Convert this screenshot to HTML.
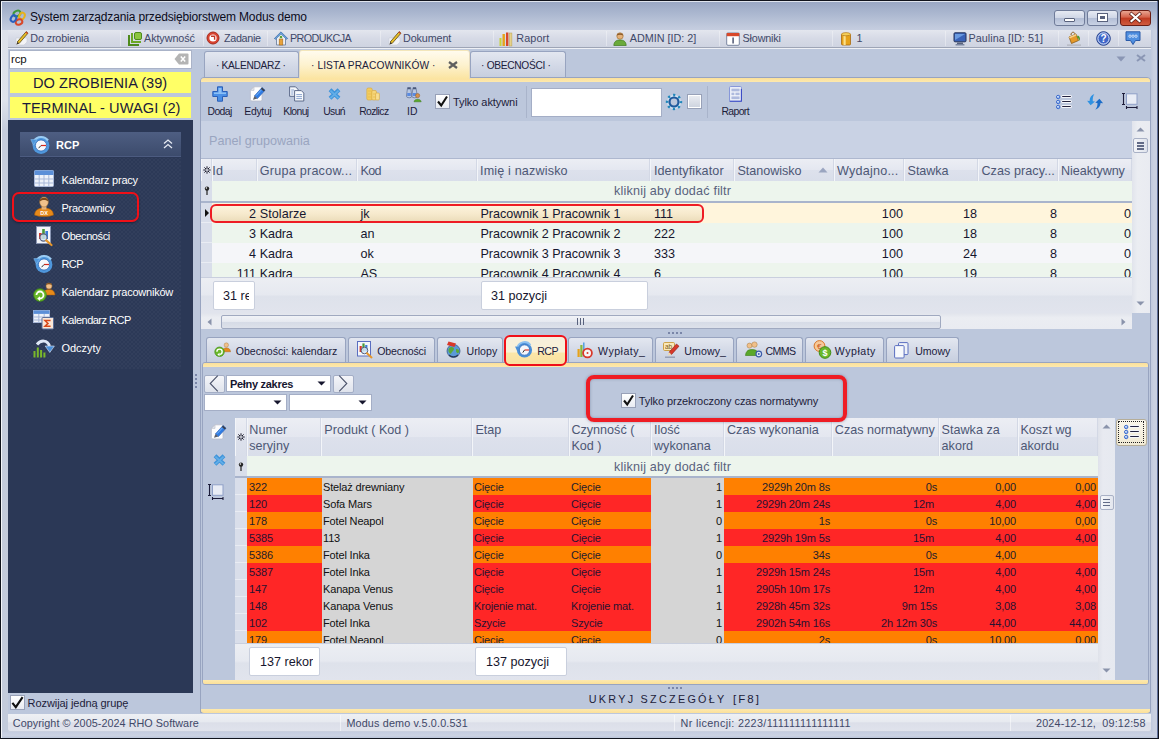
<!DOCTYPE html><html lang="pl"><head><meta charset="utf-8"><title>System zarządzania przedsiębiorstwem Modus demo</title><style>
*{box-sizing:border-box;margin:0;padding:0}
html,body{width:1159px;height:739px;overflow:hidden}
body{position:relative;background:#c3cbdd;font-family:"Liberation Sans",sans-serif;font-size:11px;color:#1c1c3a;-webkit-font-smoothing:antialiased}
.a{position:absolute}
.t{position:absolute;white-space:nowrap;line-height:1}
.t11{font-size:11px;letter-spacing:-0.15px}
.t13{font-size:12.6px}
.hd{color:#4d5775}
svg{position:absolute;overflow:visible}
.cb{position:absolute;width:14px;height:14px;border:1px solid #98a1b8;background:linear-gradient(#fff,#e9ecf3)}
.tab{position:absolute;border:1px solid #98a4c0;border-bottom:none;border-radius:3px 3px 0 0;background:linear-gradient(#e3e7f0,#d2d8e6 55%,#c6cede)}
.ytab{background:linear-gradient(#fffbee,#fdf2cf 50%,#fbe4a0)}
.col{position:absolute;top:0;height:100%;border-left:1px solid #f2f4f8;border-right:1px solid #cfd5e3}
.wbox{position:absolute;background:#fff;border:1px solid #c9cfdd;border-radius:2px}
.inp{position:absolute;background:#fff;border:1px solid #a4aec6}
</style></head><body>
<div class="a" style="left:0px;top:0px;width:1159px;height:739px;background:#10131c"></div>
<div class="a" style="left:1px;top:1px;width:1157px;height:737px;background:linear-gradient(#98a6c3 0,#a4b1cb 8px,#b4bfd5 18px,#c6cee0 29px,#bcc7dc 30px)"></div>
<div class="a" style="left:1px;top:1px;width:1px;height:737px;background:#f4f6fa"></div>
<div class="a" style="left:1px;top:1px;width:1157px;height:1px;background:#dfe4ee"></div>
<div class="a" style="left:2px;top:30px;width:6px;height:708px;background:linear-gradient(#dde1ea,#dfe3ec 70px,#c5ccdc 100px,#c3cbdb)"></div>
<div class="a" style="left:1151px;top:30px;width:7px;height:708px;background:linear-gradient(90deg,#bfc8dc,#c9d0e1 40%,#c9d0e1 80%,#a9b6d2)"></div>
<div class="a" style="left:2px;top:732px;width:1156px;height:5.5px;background:linear-gradient(#c5cde0,#cbd2e2 60%,#bcc6da)"></div>
<div class="a" style="left:1157px;top:1px;width:1px;height:737px;background:#5f6f9a"></div>
<div class="t " style="left:30px;top:11px;font-size:12px;letter-spacing:-0.155px;color:#0b0b1a">System zarządzania przedsiębiorstwem Modus demo</div>
<div class="a" style="left:1054px;top:10px;width:31px;height:16px;border:1px solid #6f7b99;border-radius:3px;background:linear-gradient(#e6eaf3,#cfd6e6 50%,#b3bed6 51%,#c9d2e4)"></div>
<div class="a" style="left:1064px;top:18px;width:11px;height:4px;border:1px solid #59627d;background:#fff;border-radius:1px"></div>
<div class="a" style="left:1087px;top:10px;width:31px;height:16px;border:1px solid #6f7b99;border-radius:3px;background:linear-gradient(#e6eaf3,#cfd6e6 50%,#b3bed6 51%,#c9d2e4)"></div>
<div class="a" style="left:1098px;top:14px;width:9px;height:7px;border:2px solid #fff;outline:1px solid #59627d;background:#59627d"></div>
<div class="a" style="left:1120px;top:10px;width:31px;height:16px;border:1px solid #6b1d14;border-radius:3px;background:linear-gradient(#e8a592,#d4624a 45%,#bf3a21 50%,#cf5b3f)"></div>
<svg style="left:1130px;top:13px" width="11" height="9" viewBox="0 0 11 9"><path d="M1.5 1 L9.5 8 M9.5 1 L1.5 8" stroke="#5a1a10" stroke-width="3.6" stroke-linecap="square"/><path d="M1.5 1 L9.5 8 M9.5 1 L1.5 8" stroke="#fff" stroke-width="2.2" stroke-linecap="square"/></svg>
<div class="a" style="left:8px;top:30px;width:1143px;height:17px;background:linear-gradient(#e3e6ee,#d6dae6 50%,#cfd4e1)"></div>
<div class="a" style="left:8px;top:47px;width:1143px;height:1px;background:#9ea5b6"></div>
<div class="a" style="left:8px;top:48px;width:1143px;height:1px;background:#eef0f5"></div>
<div class="t " style="left:30.3px;top:33px;font-size:10.8px;letter-spacing:-0.147px;color:#3f4868">Do zrobienia</div>
<div class="t " style="left:144px;top:33px;font-size:10.8px;letter-spacing:-0.075px;color:#3f4868">Aktywność</div>
<div class="t " style="left:224px;top:33px;font-size:10.8px;letter-spacing:-0.336px;color:#3f4868">Zadanie</div>
<div class="t " style="left:290px;top:33px;font-size:10.8px;letter-spacing:-0.6px;color:#3f4868">PRODUKCJA</div>
<div class="t " style="left:403px;top:33px;font-size:10.8px;letter-spacing:-0.13px;color:#3f4868">Dokument</div>
<div class="t " style="left:516.3px;top:33px;font-size:10.8px;letter-spacing:0.119px;color:#3f4868">Raport</div>
<div class="t " style="left:629.7px;top:33px;font-size:10.8px;letter-spacing:0.001px;color:#3f4868">ADMIN [ID: 2]</div>
<div class="t " style="left:742.5px;top:33px;font-size:10.8px;letter-spacing:-0.158px;color:#3f4868">Słowniki</div>
<div class="t " style="left:856.5px;top:33px;font-size:10.8px;color:#3f4868">1</div>
<div class="t " style="left:968.5px;top:33px;font-size:10.8px;letter-spacing:0.045px;color:#3f4868">Paulina [ID: 51]</div>
<div class="a" style="left:120px;top:31px;width:1px;height:15px;background:rgba(255,255,255,.35)"></div>
<div class="a" style="left:203px;top:31px;width:1px;height:15px;background:rgba(255,255,255,.35)"></div>
<div class="a" style="left:267px;top:31px;width:1px;height:15px;background:rgba(255,255,255,.35)"></div>
<div class="a" style="left:380px;top:31px;width:1px;height:15px;background:rgba(255,255,255,.35)"></div>
<div class="a" style="left:493px;top:31px;width:1px;height:15px;background:rgba(255,255,255,.35)"></div>
<div class="a" style="left:606px;top:31px;width:1px;height:15px;background:rgba(255,255,255,.35)"></div>
<div class="a" style="left:719px;top:31px;width:1px;height:15px;background:rgba(255,255,255,.35)"></div>
<div class="a" style="left:832px;top:31px;width:1px;height:15px;background:rgba(255,255,255,.35)"></div>
<div class="a" style="left:945px;top:31px;width:1px;height:15px;background:rgba(255,255,255,.35)"></div>
<div class="a" style="left:1058px;top:31px;width:1px;height:15px;background:rgba(255,255,255,.35)"></div>
<div class="a" style="left:1088px;top:31px;width:1px;height:15px;background:rgba(255,255,255,.35)"></div>
<div class="a" style="left:1118px;top:31px;width:1px;height:15px;background:rgba(255,255,255,.35)"></div>
<svg style="left:9px;top:9px" width="18" height="18" viewBox="0 0 18 18">
<ellipse cx="8" cy="4.5" rx="3.6" ry="2.6" fill="none" stroke="#3f9a3a" stroke-width="2" transform="rotate(-25 8 4.5)"/>
<ellipse cx="13" cy="7" rx="2.6" ry="3.4" fill="none" stroke="#e6b21c" stroke-width="2" transform="rotate(25 13 7)"/>
<ellipse cx="10" cy="13" rx="3.4" ry="2.6" fill="none" stroke="#d8482a" stroke-width="2" transform="rotate(-20 10 13)"/>
<ellipse cx="4.5" cy="9.5" rx="2.6" ry="3.4" fill="none" stroke="#2a5fc0" stroke-width="2" transform="rotate(30 4.5 9.5)"/>
</svg>
<svg style="left:15px;top:31px" width="14" height="15" viewBox="0 0 14 15">
<path d="M1 7 L1 14 L9 14 L12 11 L12 7Z" fill="#f3f4f7" stroke="#c9cdd8" stroke-width=".6"/>
<path d="M11.2 0.6 L13 2.2 L4 12.6 L2.2 11Z" fill="#e9bf2a" stroke="#5b4a14" stroke-width=".8"/>
<path d="M11.2 0.6 L13 2.2 L12.2 3.1 L10.4 1.5Z" fill="#d33a2c"/>
<path d="M2.2 11 L4 12.6 L1.4 13.8Z" fill="#3a3328"/>
</svg>
<svg style="left:388px;top:31px" width="14" height="15" viewBox="0 0 14 15">
<path d="M1 7 L1 14 L9 14 L12 11 L12 7Z" fill="#f3f4f7" stroke="#c9cdd8" stroke-width=".6"/>
<path d="M11.2 0.6 L13 2.2 L4 12.6 L2.2 11Z" fill="#e9bf2a" stroke="#5b4a14" stroke-width=".8"/>
<path d="M11.2 0.6 L13 2.2 L12.2 3.1 L10.4 1.5Z" fill="#d33a2c"/>
<path d="M2.2 11 L4 12.6 L1.4 13.8Z" fill="#3a3328"/>
</svg>
<svg style="left:128px;top:32px" width="14" height="14" viewBox="0 0 14 14">
<path d="M1 3 L1 13 L11 13" fill="none" stroke="#4e8a1c" stroke-width="2"/>
<path d="M4 1 L4 10 L13 10" fill="none" stroke="#6aa826" stroke-width="2"/>
<rect x="6.5" y="0.5" width="7" height="7" rx="1.5" fill="#8cc63f" stroke="#4e8a1c"/>
</svg>
<svg style="left:206px;top:31px" width="14" height="14" viewBox="0 0 14 14">
<circle cx="7" cy="7" r="6" fill="#d9432f" stroke="#a52a1c" stroke-width="1"/>
<circle cx="7" cy="7" r="3.6" fill="#fff"/>
<path d="M5 5.2 L8.6 5.2 L8.6 8.8" fill="none" stroke="#c23a28" stroke-width="1.4"/>
</svg>
<svg style="left:274px;top:31px" width="14" height="15" viewBox="0 0 14 15">
<path d="M7 1 L13.5 7.5 L11.5 7.5 L11.5 14 L2.5 14 L2.5 7.5 L0.5 7.5Z" fill="#eef0f4" stroke="#7c8da8" stroke-width="1"/>
<path d="M7 0.8 L13.6 7.4 L12.4 8.4 L7 3 L1.6 8.4 L0.4 7.4Z" fill="#6aa0d8" stroke="#3a6aa8" stroke-width=".5"/>
<rect x="5.2" y="8" width="3.6" height="6" fill="#e8a23a" stroke="#a86a1a" stroke-width=".6"/>
<circle cx="7" cy="6" r="1.3" fill="#59a33a"/>
</svg>
<svg style="left:499px;top:32px" width="15" height="14" viewBox="0 0 15 14">
<rect x="0.5" y="6" width="2" height="8" fill="#c8d23a"/>
<rect x="3.5" y="2" width="2.4" height="12" fill="#e6a21a"/>
<rect x="7" y="0.5" width="2.4" height="13.5" fill="#d8482a"/>
<rect x="10.5" y="1" width="2.4" height="13" fill="#e6d28a" stroke="#b8a050" stroke-width=".5"/>
</svg>
<svg style="left:613px;top:32px" width="14" height="14" viewBox="0 0 14 14">
<circle cx="7" cy="4" r="3.2" fill="#e6b27a" stroke="#a8763a" stroke-width=".7"/>
<path d="M0.8 13.5 C1 9 4 8 7 8 C10 8 13 9 13.2 13.5Z" fill="#6aaa3a" stroke="#3f7a1c" stroke-width=".7"/>
<path d="M3.8 3.4 C4 0.6 10 0.6 10.2 3.4 C8 2.4 6 2.4 3.8 3.4Z" fill="#8a5a2a"/>
</svg>
<svg style="left:726px;top:32px" width="14" height="14" viewBox="0 0 14 14">
<rect x="0.7" y="1" width="12.6" height="12.3" rx="1.2" fill="#fff" stroke="#7a86a0" stroke-width="1"/>
<rect x="0.7" y="1" width="12.6" height="3.2" fill="#d8482a"/>
<rect x="6.3" y="5.5" width="1.6" height="6" fill="#59627d"/>
</svg>
<svg style="left:840px;top:32px" width="12" height="14" viewBox="0 0 12 14">
<rect x="1.5" y="2" width="9" height="11" rx="1" fill="#e6a21a" stroke="#a86a10" stroke-width=".8"/>
<rect x="3.5" y="2" width="2.2" height="11" fill="#fbe08a"/>
<ellipse cx="6" cy="2.2" rx="4.5" ry="1.6" fill="#f6d05a" stroke="#a86a10" stroke-width=".6"/>
</svg>
<svg style="left:953px;top:32px" width="14" height="14" viewBox="0 0 14 14">
<rect x="1" y="0.8" width="12" height="9" rx="1" fill="#3a63b8" stroke="#26345a" stroke-width="1"/>
<path d="M2 2 L12 2 L2 8Z" fill="#6a9ae0"/>
<rect x="4" y="10.5" width="6" height="1.5" fill="#59627d"/>
<rect x="2.5" y="12" width="9" height="1.6" rx=".6" fill="#7a86a0"/>
</svg>
<svg style="left:1066px;top:31px" width="16" height="15" viewBox="0 0 16 15">
<path d="M3 6 L10 3 L12.5 9.5 L5.5 12.5Z" fill="#e69a2a" stroke="#8a5a14" stroke-width=".8"/>
<path d="M3 6 L10 3 L10.6 4.6 L3.6 7.6Z" fill="#f6d08a"/>
<path d="M5 4 C5 0.5 8.5 0.5 9 3" fill="none" stroke="#8a5a14" stroke-width="1"/>
<path d="M11.5 4.5 C14 5 14.5 8 13.5 10 C13 8 12.4 7 11 6.2Z" fill="#4e9a2a"/>
<rect x="1" y="13.3" width="14" height="1.7" fill="#b9bcc6"/>
</svg>
<svg style="left:1096px;top:31px" width="15" height="15" viewBox="0 0 15 15">
<circle cx="7.5" cy="7.5" r="6.8" fill="#3f66c8" stroke="#26418a" stroke-width="1"/>
<circle cx="7.5" cy="7.5" r="5.6" fill="none" stroke="#dfe8fb" stroke-width="1"/>
<text x="7.5" y="11.3" font-family="Liberation Sans, sans-serif" font-size="10" font-weight="bold" fill="#fff" text-anchor="middle">?</text>
</svg>
<svg style="left:1125px;top:31px" width="16" height="15" viewBox="0 0 16 15">
<path d="M1 0.8 L15 0.8 L15 9.5 L10.5 9.5 L8 13.5 L5.5 9.5 L1 9.5Z" fill="#4f8fe0" stroke="#2a5aa8" stroke-width="1"/>
<circle cx="5" cy="5.2" r="1.2" fill="#4f8fe0" stroke="#e8f0fc" stroke-width=".8"/>
<circle cx="8" cy="5.2" r="1.2" fill="#4f8fe0" stroke="#e8f0fc" stroke-width=".8"/>
<circle cx="11" cy="5.2" r="1.2" fill="#4f8fe0" stroke="#e8f0fc" stroke-width=".8"/>
</svg>
<div class="a" style="left:9px;top:50px;width:183px;height:19px;background:#fff;border:1px solid #aab3c8"></div>
<div class="t t11" style="left:11px;top:54px;color:#111;font-size:11.5px">rcp</div>
<svg style="left:174px;top:53px" width="15" height="12" viewBox="0 0 15 12"><path d="M5 0.5 L13.5 0.5 Q14.5 0.5 14.5 1.5 L14.5 10.5 Q14.5 11.5 13.5 11.5 L5 11.5 L0.5 6Z" fill="#b4b4b4"/><path d="M6.8 3.6 L11.2 8.4 M11.2 3.6 L6.8 8.4" stroke="#fff" stroke-width="1.5"/></svg>
<div class="a" style="left:10px;top:72px;width:181px;height:21px;background:#ffff66"></div>
<div class="a" style="left:10px;top:97px;width:181px;height:21px;background:#ffff66"></div>
<div class="t " style="left:33px;top:76px;font-size:14.6px;letter-spacing:0.025px;color:#1a1a3a">DO ZROBIENIA (39)</div>
<div class="t " style="left:22px;top:101px;font-size:14.6px;letter-spacing:0.076px;color:#1a1a3a">TERMINAL - UWAGI (2)</div>
<div class="a" style="left:8px;top:120px;width:185px;height:573px;background:#2b3856"></div>
<div class="a" style="left:20px;top:158px;width:161px;height:211px;background-color:#2c3957;background-image:radial-gradient(#35425f 0.6px,transparent 0.9px),radial-gradient(#35425f 0.6px,transparent 0.9px);background-size:4px 4px;background-position:0 0,2px 2px"></div>
<div class="a" style="left:20px;top:132px;width:161px;height:25px;background:linear-gradient(#4e5e82,#3c4b6c);border-bottom:1px solid #4c5b80"></div>
<div class="t " style="left:56px;top:140px;font-size:11px;font-weight:bold;color:#fff">RCP</div>
<svg style="left:163px;top:139px" width="10" height="10" viewBox="0 0 10 10"><path d="M1 4.5 L5 1 L9 4.5 M1 9 L5 5.5 L9 9" fill="none" stroke="#e6eaf3" stroke-width="1.3"/></svg>
<div class="t " style="left:61.5px;top:175px;font-size:11px;letter-spacing:-0.206px;color:#fff">Kalendarz pracy</div>
<div class="t " style="left:61.5px;top:203px;font-size:11px;letter-spacing:-0.293px;color:#fff">Pracownicy</div>
<div class="t " style="left:61.5px;top:231px;font-size:11px;letter-spacing:-0.409px;color:#fff">Obecności</div>
<div class="t " style="left:61.5px;top:259px;font-size:11px;letter-spacing:-0.6px;color:#fff">RCP</div>
<div class="t " style="left:61.5px;top:287px;font-size:11px;letter-spacing:-0.219px;color:#fff">Kalendarz pracowników</div>
<div class="t " style="left:61.5px;top:315px;font-size:11px;letter-spacing:-0.501px;color:#fff">Kalendarz RCP</div>
<div class="t " style="left:61.5px;top:343px;font-size:11px;letter-spacing:-0.038px;color:#fff">Odczyty</div>
<div class="a" style="left:12.3px;top:191.8px;width:127px;height:30px;border:2.7px solid #f01018;border-radius:7px;box-shadow:0 1px 2px rgba(10,15,30,.5)"></div>
<div class="cb" style="left:10px;top:695px;width:15px;height:15px;"></div>
<svg style="left:11px;top:696px" width="13" height="13" viewBox="0 0 13 13"><path d="M1.4 6.8 L4.8 11.2 L11.6 1.2" fill="none" stroke="#111" stroke-width="2.1"/></svg>
<div class="t " style="left:27.6px;top:698px;font-size:11px;letter-spacing:-0.069px;color:#1c1c3a">Rozwijaj jedną grupę</div>
<svg style="left:30px;top:135px" width="20" height="20" viewBox="0 0 20 20">
<circle cx="11" cy="10.5" r="8.4" fill="#4f97dc"/>
<path d="M4 6 A8.4 8.4 0 0 1 18 5.5" fill="none" stroke="#9accf4" stroke-width="2.2"/>
<path d="M0.8 4.6 L7 4.4 L3.4 10.2Z" fill="#4f97dc" stroke="#8cc2f0" stroke-width=".5"/>
<circle cx="11" cy="10.5" r="5.6" fill="#f6f8fc" stroke="#2f6ab8" stroke-width=".8"/>
<path d="M11 10.5 L16 10.5" stroke="#d8281c" stroke-width="1.2"/>
<path d="M11 10.5 L8.6 13.2" stroke="#333" stroke-width="1"/>
</svg>
<svg style="left:33px;top:254px" width="20" height="20" viewBox="0 0 20 20">
<circle cx="11" cy="10.5" r="8.4" fill="#4f97dc"/>
<path d="M4 6 A8.4 8.4 0 0 1 18 5.5" fill="none" stroke="#9accf4" stroke-width="2.2"/>
<path d="M0.8 4.6 L7 4.4 L3.4 10.2Z" fill="#4f97dc" stroke="#8cc2f0" stroke-width=".5"/>
<circle cx="11" cy="10.5" r="5.6" fill="#f6f8fc" stroke="#2f6ab8" stroke-width=".8"/>
<path d="M11 10.5 L16 10.5" stroke="#d8281c" stroke-width="1.2"/>
<path d="M11 10.5 L8.6 13.2" stroke="#333" stroke-width="1"/>
</svg>
<svg style="left:34px;top:170px" width="20" height="17" viewBox="0 0 20 17">
<rect x="0.5" y="0.5" width="19" height="16" rx="1" fill="#eef2fa" stroke="#a9b8d8" stroke-width="1"/>
<rect x="0.5" y="0.5" width="19" height="4.5" fill="#5b8fd8"/>
<path d="M0.5 9 H19.5 M0.5 13 H19.5 M5.2 5 V16.5 M10 5 V16.5 M14.8 5 V16.5" stroke="#a9b8d8" stroke-width="1"/>
</svg>
<svg style="left:34px;top:196px" width="20" height="21" viewBox="0 0 20 21">
<path d="M0.5 19 C1 13.5 5 12 10 12 C15 12 19 13.5 19.5 19 C15 21 5 21 0.5 19Z" fill="#e68a1a" stroke="#a85a0a" stroke-width=".6"/>
<rect x="7.6" y="9" width="4.8" height="4.5" fill="#e6b27a"/>
<ellipse cx="10" cy="6" rx="4.3" ry="5" fill="#f0c08a" stroke="#a8763a" stroke-width=".6"/>
<path d="M5.6 5.5 C5.4 0.5 14.6 0.5 14.4 5.5 C12.5 3.4 7.5 3.4 5.6 5.5Z" fill="#7a4a1a"/>
<text x="10" y="19" font-family="Liberation Sans, sans-serif" font-size="5.5" font-weight="bold" fill="#fff" text-anchor="middle">DX</text>
</svg>
<svg style="left:36px;top:226px" width="18" height="20" viewBox="0 0 18 20">
<rect x="0.5" y="0.5" width="14" height="17" fill="#f4f6fa" stroke="#8a96b4" stroke-width="1"/>
<rect x="3" y="7" width="2.6" height="6" fill="#d8382a"/>
<rect x="6.2" y="3" width="2.6" height="10" fill="#4a9a3a"/>
<rect x="9.4" y="5" width="2.6" height="8" fill="#3a7ad8"/>
<circle cx="7.5" cy="11.5" r="3.6" fill="rgba(210,230,250,.8)" stroke="#59627d" stroke-width="1.1"/>
<path d="M10.2 14.4 L15.5 19" stroke="#e6962a" stroke-width="2.2" stroke-linecap="round"/>
</svg>
<svg style="left:33px;top:282px" width="22" height="20" viewBox="0 0 22 20">
<circle cx="16" cy="4" r="3" fill="#f0c08a" stroke="#a8763a" stroke-width=".6"/>
<path d="M13 3 C13.2 0.2 18.8 0.2 19 3 C17.5 2 14.5 2 13 3Z" fill="#7a4a1a"/>
<path d="M10 13 C10.5 8.5 13 7.5 16 7.5 C19 7.5 21.5 8.5 22 13Z" fill="#e68a1a" stroke="#a85a0a" stroke-width=".5"/>
<circle cx="7" cy="13" r="6.3" fill="#6ab82a" stroke="#3f8a14" stroke-width=".8"/>
<path d="M3.5 13 A3.5 3.5 0 1 1 7 16.5" fill="none" stroke="#fff" stroke-width="1.8"/>
<path d="M7 14.2 L7 19 L4.2 16.6Z" fill="#fff"/>
</svg>
<svg style="left:33px;top:310px" width="22" height="20" viewBox="0 0 22 20">
<rect x="0.5" y="0.5" width="16" height="12" fill="#eef2fa" stroke="#a9b8d8" stroke-width="1"/>
<rect x="0.5" y="0.5" width="16" height="3.4" fill="#5b8fd8"/>
<path d="M0.5 7 H16.5 M0.5 10 H16.5 M5.8 4 V12.5 M11.2 4 V12.5" stroke="#a9b8d8" stroke-width="1"/>
<rect x="9" y="7.5" width="11.5" height="11.5" rx="1" fill="#fbe8d8" stroke="#5b6f9a" stroke-width="1"/>
<path d="M17.6 10.6 L12 10.6 L15 13.4 L12 16.2 L17.6 16.2" fill="none" stroke="#d8481a" stroke-width="1.5"/>
</svg>
<svg style="left:33px;top:338px" width="22" height="20" viewBox="0 0 22 20">
<rect x="0.5" y="13" width="2" height="6.5" fill="#7ab82a"/>
<rect x="3.8" y="9.5" width="2" height="10" fill="#7ab82a"/>
<rect x="7.1" y="12" width="2" height="7.5" fill="#7ab82a"/>
<rect x="10.4" y="14.5" width="2" height="5" fill="#7ab82a"/>
<path d="M4 6.5 C8 1.5 14.5 2 16.5 8" fill="none" stroke="#dfe8f6" stroke-width="3"/>
<path d="M12.2 8 L21.4 8 L16.8 14.5Z" fill="#4a8fd8" stroke="#dfe8f6" stroke-width=".6"/>
</svg>
<div class="a" style="left:195px;top:374px;width:2px;height:2px;background:#7a86a8"></div>
<div class="a" style="left:195px;top:378px;width:2px;height:2px;background:#7a86a8"></div>
<div class="a" style="left:195px;top:382px;width:2px;height:2px;background:#7a86a8"></div>
<div class="a" style="left:195px;top:386px;width:2px;height:2px;background:#7a86a8"></div>
<div class="tab" style="left:204px;top:51px;width:95px;height:27px;"></div>
<div class="tab ytab" style="left:299px;top:50px;width:171px;height:29px;border-color:#f3e6bb #e6dcc0 transparent #e6dcc0;z-index:2"></div>
<div class="tab" style="left:470px;top:51px;width:96px;height:27px;"></div>
<div class="t " style="left:216px;top:61px;font-size:10.2px;letter-spacing:-0.299px;color:#20203c">· KALENDARZ ·</div>
<div class="t " style="left:311px;top:61px;font-size:10.2px;letter-spacing:0.09px;color:#20203c;z-index:3">· LISTA PRACOWNIKÓW ·</div>
<div class="t " style="left:481px;top:61px;font-size:10.2px;letter-spacing:-0.298px;color:#20203c">· OBECNOŚCI ·</div>
<svg style="left:448px;top:61px;z-index:3" width="10" height="8" viewBox="0 0 10 8"><path d="M1 1 L9 7 M9 1 L1 7" stroke="#5f5f5f" stroke-width="2.2"/></svg>
<svg style="left:1116px;top:56px" width="10" height="6" viewBox="0 0 10 6"><path d="M0.5 0.5 L9.5 0.5 L5 5.5Z" fill="#8a96b4"/></svg>
<svg style="left:1136px;top:54px" width="10" height="8" viewBox="0 0 10 8"><path d="M1 1 L9 7 M9 1 L1 7" stroke="#8a96b4" stroke-width="2"/></svg>
<div class="a" style="left:200px;top:77px;width:951px;height:636px;background:#bcc7dc;border:1px solid #98a4c0;border-radius:4px 4px 0 0"></div>
<div class="a" style="left:201px;top:78px;width:949px;height:4px;background:linear-gradient(#fbe09a,#fde9ae);border-radius:3px 3px 0 0"></div>
<div class="a" style="left:201px;top:82px;width:949px;height:39px;background:#bcc7dc"></div>
<div class="a" style="left:201px;top:121px;width:931px;height:38px;background:#c9d2e4"></div>
<div class="t " style="left:209px;top:135px;font-size:12.6px;color:#9aa5c0">Panel grupowania</div>
<div class="a" style="left:201px;top:158px;width:931px;height:1px;background:#aeb8cf"></div>
<div class="t " style="left:207.5px;top:106.5px;font-size:10.4px;letter-spacing:-0.587px;color:#1c1c3a">Dodaj</div>
<div class="t " style="left:244.3px;top:106.5px;font-size:10.4px;letter-spacing:-0.296px;color:#1c1c3a">Edytuj</div>
<div class="t " style="left:283.3px;top:106.5px;font-size:10.4px;letter-spacing:-0.6px;color:#1c1c3a">Klonuj</div>
<div class="t " style="left:323.2px;top:106.5px;font-size:10.4px;letter-spacing:-0.6px;color:#1c1c3a">Usuń</div>
<div class="t " style="left:359.2px;top:106.5px;font-size:10.4px;letter-spacing:-0.6px;color:#1c1c3a">Rozlicz</div>
<div class="t " style="left:407px;top:106.5px;font-size:10.4px;letter-spacing:0.109px;color:#1c1c3a">ID</div>
<div class="t " style="left:721.4px;top:106.5px;font-size:10.4px;letter-spacing:-0.6px;color:#1c1c3a">Raport</div>
<svg style="left:212px;top:86px" width="16" height="16" viewBox="0 0 16 16"><path d="M5.5 0.8 H10.5 V5.5 H15.2 V10.5 H10.5 V15.2 H5.5 V10.5 H0.8 V5.5 H5.5Z" fill="#4a8fe6" stroke="#2a5fb8" stroke-width="1" stroke-linejoin="round"/><path d="M6.5 2 H9.5 V6.5 H14 V8 H2 V6.5 H6.5Z" fill="#8cc0f6"/></svg>
<svg style="left:250px;top:86px" width="16" height="16" viewBox="0 0 16 16">
<path d="M4 0.8 L10.4 0.8 Q12 0.8 12 2.4 L12 13.4 Q12 15 10.4 15 L2 15 Q0.4 15 0.4 13.4 L0.4 4.4Z" fill="#fdfdfe" stroke="#b9bdca" stroke-width=".8"/>
<path d="M0.4 4.4 L4 4.4 L4 0.8Z" fill="#e3e6ed" stroke="#b9bdca" stroke-width=".6"/>
<path d="M12 1.6 L15 4.3 L7.4 12.6 L4.4 9.9Z" fill="#2f7ce4" stroke="#1f56b0" stroke-width=".6"/>
<path d="M6.2 9.6 L12.6 2.6" stroke="#7ab4f6" stroke-width="1"/>
<path d="M12 1.6 L15 4.3 L13.8 5.6 L10.8 2.9Z" fill="#3a3f4c"/>
<path d="M4.4 9.9 L7.4 12.6 L3 13.8Z" fill="#5a5f6c"/>
</svg>
<svg style="left:289px;top:86px" width="16" height="16" viewBox="0 0 16 16">
<path d="M0.6 0.8 H6.5 L9 3.3 V10.3 H0.6Z" fill="#f3f6fb" stroke="#4f5d80" stroke-width=".9"/>
<path d="M5.6 4.6 H12.3 L14.8 7.1 V15 H5.6Z" fill="#f9fbfe" stroke="#4f5d80" stroke-width=".9"/>
<path d="M7.3 8.6 H13 M7.3 10.6 H13 M7.3 12.6 H13 M2.2 4 H5 M2.2 6 H4.4 M2.2 8 H4.4" stroke="#7f9ac8" stroke-width=".9"/>
</svg>
<svg style="left:328px;top:88px" width="13" height="12" viewBox="0 0 13 12"><path d="M2 1.8 L11 10.2 M11 1.8 L2 10.2" stroke="#3f94da" stroke-width="4" stroke-linecap="butt"/><path d="M2.4 2.6 L10.6 10.2 M10.6 2.6 L2.4 10.2" stroke="#62aee8" stroke-width="1.8"/></svg>
<svg style="left:366px;top:87px" width="14" height="14" viewBox="0 0 14 14">
<rect x="0.8" y="1" width="5.4" height="12" rx="1.4" fill="#f2cc62" stroke="#d8a838" stroke-width=".6"/>
<rect x="5.8" y="3.5" width="4.6" height="9.5" rx="1.2" fill="#f6d67a" stroke="#d8a838" stroke-width=".6"/>
<rect x="9.6" y="6" width="3.8" height="7" rx="1" fill="#f8de92" stroke="#d8a838" stroke-width=".6"/>
<path d="M2 4 H5 M2 7 H5 M2 10 H5 M7 7 H9.5 M7 10 H9.5" stroke="#e6b848" stroke-width=".7"/>
</svg>
<svg style="left:406px;top:87px" width="15" height="15" viewBox="0 0 15 15">
<path d="M1.6 0.6 H4.6 L5.8 9 Q5.8 10.8 3.2 10.8 Q0.4 10.8 0.4 9Z" fill="#b9c8e2" stroke="#5f6f94" stroke-width=".7"/>
<path d="M7 0.6 H10 L11.2 9 Q11.2 10.8 8.6 10.8 Q5.8 10.8 5.8 9Z" fill="#b9c8e2" stroke="#5f6f94" stroke-width=".7"/>
<path d="M1.6 0.6 H4.6 V2.2 H1.6Z M7 0.6 H10 V2.2 H7Z" fill="#4a5878"/>
<rect x="1.2" y="6" width="3.6" height="3" fill="#5a8ae0"/><rect x="6.6" y="6" width="3.6" height="3" fill="#5a8ae0"/>
<circle cx="11.6" cy="8.6" r="2.1" fill="#d8904a" stroke="#8a5a2a" stroke-width=".5"/>
<path d="M8 14.8 C8.2 11.4 15 11.4 15.2 14.8Z" fill="#5aa82a" stroke="#3a7a14" stroke-width=".5"/>
</svg>
<div class="cb" style="left:435px;top:94px;width:15px;height:15px;"></div>
<svg style="left:436px;top:95px" width="13" height="13" viewBox="0 0 13 13"><path d="M2 6.5 L5.2 10.5 L11 1.5" fill="none" stroke="#111" stroke-width="2.1"/></svg>
<div class="t " style="left:453px;top:97px;font-size:11px;letter-spacing:-0.067px;color:#1c1c3a">Tylko aktywni</div>
<div class="a" style="left:526px;top:86px;width:1px;height:32px;background:#a9b4cb"></div>
<div class="inp" style="left:531px;top:88px;width:131px;height:29px;"></div>
<svg style="left:666px;top:94px" width="16" height="16" viewBox="0 0 16 16">
<circle cx="8" cy="8" r="6.2" fill="none" stroke="#d4e6f4" stroke-width="1.6"/>
<circle cx="8" cy="8" r="7" fill="none" stroke="#2288bc" stroke-width="2.4" stroke-dasharray="2.2 3.298" stroke-dashoffset="1.1"/>
<circle cx="8" cy="8" r="4.5" fill="none" stroke="#1f5a9e" stroke-width="2.2"/>
</svg>
<div class="cb" style="left:687px;top:94px;width:15px;height:15px;background:linear-gradient(#eceef3,#ccd2de);box-shadow:inset 0 0 0 1px #fff"></div>
<div class="a" style="left:707px;top:86px;width:1px;height:32px;background:#a9b4cb"></div>
<svg style="left:729px;top:86px" width="13" height="16" viewBox="0 0 13 16">
<rect x="0.6" y="0.6" width="11.8" height="14.6" rx=".8" fill="#f6f8fc" stroke="#7f90d8" stroke-width="1"/>
<path d="M12.4 3 V15.2 H0.6" fill="none" stroke="#3a4ac4" stroke-width="1.1"/>
<rect x="2.4" y="2.6" width="8.2" height="2.8" fill="#aebade"/>
<rect x="2.4" y="6.6" width="3" height="2.6" fill="#aebade"/><rect x="6.4" y="6.6" width="4.2" height="2.6" fill="#aebade"/>
<rect x="2.4" y="10.4" width="8.2" height="2.8" fill="#aebade"/>
</svg>
<svg style="left:1056px;top:95px" width="16" height="14" viewBox="0 0 16 14">
<circle cx="2.2" cy="2" r="1.7" fill="#9cc0f4" stroke="#2f5fc8" stroke-width=".9"/>
<circle cx="2.2" cy="7" r="1.7" fill="#9cc0f4" stroke="#2f5fc8" stroke-width=".9"/>
<circle cx="2.2" cy="12" r="1.7" fill="#9cc0f4" stroke="#2f5fc8" stroke-width=".9"/>
<circle cx="1.9" cy="1.6" r=".6" fill="#fff"/><circle cx="1.9" cy="6.6" r=".6" fill="#fff"/><circle cx="1.9" cy="11.6" r=".6" fill="#fff"/>
<path d="M6.6 1.5 H14.4 M6.6 6.5 H14.4 M6.6 11.5 H14.4" stroke="#f4f6fa" stroke-width="3" stroke-linecap="round"/>
<path d="M6.2 1.5 H14.8 M6.2 6.5 H14.8 M6.2 11.5 H14.8" stroke="#23233f" stroke-width="1"/>
</svg>
<svg style="left:1087px;top:94px" width="17" height="17" viewBox="0 0 17 17">
<path d="M7.4 0 C4.5 1 2.5 3.5 2.6 6.9 L0.1 6.7 L3.6 11.2 L8 7.4 L5.8 7.2 C5.6 4.5 6 2 7.4 0Z" fill="#2f92e2"/>
<path d="M12.4 4.8 L16.1 9.3 L13.6 9.1 C13.6 12 11.5 14.5 8.3 15.7 C10.2 13.5 10.6 11.5 10.4 9 L8.3 8.8Z" fill="#1b6cc8"/>
</svg>
<svg style="left:1122px;top:93px" width="16" height="16" viewBox="0 0 16 16">
<rect x="4.5" y="0.8" width="10.5" height="10.5" fill="#e9edf6" stroke="#8fa0c8" stroke-width="1"/>
<path d="M1.5 0.5 V11.5 M0 0.5 H3 M0 11.5 H3" stroke="#1c1c3a" stroke-width="1.1"/>
<path d="M4.5 14.5 H15 M4.5 13 V16 M15 13 V16" stroke="#1c1c3a" stroke-width="1.1"/>
</svg>
<div class="a" style="left:201px;top:159px;width:931px;height:22px;background:linear-gradient(#eceef4 0,#e4e7f0 50%,#dde1ec 50%,#d9deea 100%)"></div>
<div class="a" style="left:201px;top:159px;width:11px;height:22px;border-left:1px solid #f3f5f9;border-right:1px solid #d3d8e5"></div>
<div class="a" style="left:212px;top:159px;width:45px;height:22px;border-left:1px solid #f3f5f9;border-right:1px solid #d3d8e5"></div>
<div class="t " style="left:212.3px;top:165px;font-size:12.6px;letter-spacing:0.097px;color:#4d5775">Id</div>
<div class="a" style="left:257px;top:159px;width:100px;height:22px;border-left:1px solid #f3f5f9;border-right:1px solid #d3d8e5"></div>
<div class="t " style="left:259.8px;top:165px;font-size:12.6px;letter-spacing:0.236px;color:#4d5775">Grupa pracow...</div>
<div class="a" style="left:357px;top:159px;width:120px;height:22px;border-left:1px solid #f3f5f9;border-right:1px solid #d3d8e5"></div>
<div class="t " style="left:360.4px;top:165px;font-size:12.6px;letter-spacing:-0.6px;color:#4d5775">Kod</div>
<div class="a" style="left:477px;top:159px;width:173px;height:22px;border-left:1px solid #f3f5f9;border-right:1px solid #d3d8e5"></div>
<div class="t " style="left:480px;top:165px;font-size:12.6px;letter-spacing:0.158px;color:#4d5775">Imię i nazwisko</div>
<div class="a" style="left:650px;top:159px;width:84px;height:22px;border-left:1px solid #f3f5f9;border-right:1px solid #d3d8e5"></div>
<div class="t " style="left:653.9px;top:165px;font-size:12.6px;letter-spacing:0.092px;color:#4d5775">Identyfikator</div>
<div class="a" style="left:734px;top:159px;width:100px;height:22px;border-left:1px solid #f3f5f9;border-right:1px solid #d3d8e5"></div>
<div class="t " style="left:737.5px;top:165px;font-size:12.6px;letter-spacing:-0.034px;color:#4d5775">Stanowisko</div>
<div class="a" style="left:834px;top:159px;width:70px;height:22px;border-left:1px solid #f3f5f9;border-right:1px solid #d3d8e5"></div>
<div class="t " style="left:837.1px;top:165px;font-size:12.6px;letter-spacing:0.202px;color:#4d5775">Wydajno...</div>
<div class="a" style="left:904px;top:159px;width:74px;height:22px;border-left:1px solid #f3f5f9;border-right:1px solid #d3d8e5"></div>
<div class="t " style="left:907.6px;top:165px;font-size:12.6px;letter-spacing:-0.08px;color:#4d5775">Stawka</div>
<div class="a" style="left:978px;top:159px;width:80px;height:22px;border-left:1px solid #f3f5f9;border-right:1px solid #d3d8e5"></div>
<div class="t " style="left:981.4px;top:165px;font-size:12.6px;letter-spacing:0.071px;color:#4d5775">Czas pracy...</div>
<div class="a" style="left:1058px;top:159px;width:74px;height:22px;border-left:1px solid #f3f5f9;border-right:1px solid #d3d8e5"></div>
<div class="t " style="left:1061.1px;top:165px;font-size:12.6px;letter-spacing:-0.065px;color:#4d5775">Nieaktywny</div>
<svg style="left:203px;top:166px" width="8" height="8" viewBox="0 0 8 8"><path d="M4 0.3 V7.7 M0.3 4 H7.7 M1.4 1.4 L6.6 6.6 M6.6 1.4 L1.4 6.6" stroke="#1c1c2c" stroke-width="1"/><circle cx="4" cy="4" r="1.1" fill="#e4e7ef"/></svg>
<svg style="left:818px;top:167px" width="10" height="6" viewBox="0 0 10 6"><path d="M0.5 5.5 L5 0.5 L9.5 5.5Z" fill="#9aa5c0"/></svg>
<div class="a" style="left:201px;top:181px;width:11px;height:20px;background:#d9deea"></div>
<div class="a" style="left:212px;top:181px;width:920px;height:20px;background:#edf5ed"></div>
<div class="t " style="left:614px;top:185px;font-size:12.6px;letter-spacing:0.196px;color:#59627d">kliknij aby dodać filtr</div>
<svg style="left:204px;top:186px" width="6" height="10" viewBox="0 0 6 10"><circle cx="3" cy="2.6" r="2.2" fill="#222"/><rect x="2.4" y="4" width="1.2" height="5" fill="#222"/><circle cx="2.4" cy="2" r=".8" fill="#fff"/></svg>
<div class="a" style="left:201px;top:201px;width:931px;height:2px;background:#a9b4cc"></div>
<div class="a" style="left:201px;top:203px;width:931px;height:74px;overflow:hidden">
<div class="a" style="left:0;top:0px;width:11px;height:20px;background:#d9deea;border-bottom:1px solid #e9ecf3"></div>
<div class="a" style="left:11px;top:0px;width:920px;height:20px;background:#fff5dc"></div>
<div class="a" style="left:10px;top:2px;width:492px;height:17px;border-radius:5px;background:linear-gradient(#fdf4de,#f6e9cc 55%,#eadbb8)"></div>
<div class="t t13" style="right:876px;top:5px;color:#16162e">2</div>
<div class="t t13" style="letter-spacing:0.043px;left:58.80000000000001px;top:5px;color:#16162e">Stolarze</div>
<div class="t t13" style="left:159.39999999999998px;top:5px;color:#16162e">jk</div>
<div class="t t13" style="letter-spacing:-0.031px;left:279.5px;top:5px;color:#16162e">Pracownik 1 Pracownik 1</div>
<div class="t t13" style="left:452.9px;top:5px;color:#16162e">111</div>
<div class="t t13" style="letter-spacing:0.044px;right:229px;top:5px;color:#16162e">100</div>
<div class="t t13" style="right:155px;top:5px;color:#16162e">18</div>
<div class="t t13" style="right:75px;top:5px;color:#16162e">8</div>
<div class="t t13" style="right:1px;top:5px;color:#16162e">0</div>
<div class="a" style="left:0;top:20px;width:11px;height:20px;background:#d9deea;border-bottom:1px solid #e9ecf3"></div>
<div class="a" style="left:11px;top:20px;width:920px;height:20px;background:#edf5ed"></div>
<div class="t t13" style="right:876px;top:25px;color:#16162e">3</div>
<div class="t t13" style="letter-spacing:-0.151px;left:58.80000000000001px;top:25px;color:#16162e">Kadra</div>
<div class="t t13" style="left:159.39999999999998px;top:25px;color:#16162e">an</div>
<div class="t t13" style="letter-spacing:-0.031px;left:279.5px;top:25px;color:#16162e">Pracownik 2 Pracownik 2</div>
<div class="t t13" style="left:452.9px;top:25px;color:#16162e">222</div>
<div class="t t13" style="letter-spacing:0.044px;right:229px;top:25px;color:#16162e">100</div>
<div class="t t13" style="right:155px;top:25px;color:#16162e">18</div>
<div class="t t13" style="right:75px;top:25px;color:#16162e">8</div>
<div class="t t13" style="right:1px;top:25px;color:#16162e">0</div>
<div class="a" style="left:0;top:40px;width:11px;height:20px;background:#d9deea;border-bottom:1px solid #e9ecf3"></div>
<div class="a" style="left:11px;top:40px;width:920px;height:20px;background:#f5f6f9"></div>
<div class="t t13" style="right:876px;top:45px;color:#16162e">4</div>
<div class="t t13" style="letter-spacing:-0.151px;left:58.80000000000001px;top:45px;color:#16162e">Kadra</div>
<div class="t t13" style="left:159.39999999999998px;top:45px;color:#16162e">ok</div>
<div class="t t13" style="letter-spacing:-0.031px;left:279.5px;top:45px;color:#16162e">Pracownik 3 Pracownik 3</div>
<div class="t t13" style="left:452.9px;top:45px;color:#16162e">333</div>
<div class="t t13" style="letter-spacing:0.044px;right:229px;top:45px;color:#16162e">100</div>
<div class="t t13" style="right:155px;top:45px;color:#16162e">24</div>
<div class="t t13" style="right:75px;top:45px;color:#16162e">8</div>
<div class="t t13" style="right:1px;top:45px;color:#16162e">0</div>
<div class="a" style="left:0;top:60px;width:11px;height:20px;background:#d9deea;border-bottom:1px solid #e9ecf3"></div>
<div class="a" style="left:11px;top:60px;width:920px;height:20px;background:#edf5ed"></div>
<div class="t t13" style="right:876px;top:65px;color:#16162e">111</div>
<div class="t t13" style="letter-spacing:-0.151px;left:58.80000000000001px;top:65px;color:#16162e">Kadra</div>
<div class="t t13" style="left:159.39999999999998px;top:65px;color:#16162e">AS</div>
<div class="t t13" style="letter-spacing:-0.031px;left:279.5px;top:65px;color:#16162e">Pracownik 4 Pracownik 4</div>
<div class="t t13" style="left:452.9px;top:65px;color:#16162e">6</div>
<div class="t t13" style="letter-spacing:0.044px;right:229px;top:65px;color:#16162e">100</div>
<div class="t t13" style="right:155px;top:65px;color:#16162e">19</div>
<div class="t t13" style="right:75px;top:65px;color:#16162e">8</div>
<div class="t t13" style="right:1px;top:65px;color:#16162e">0</div>
</div>
<svg style="left:204.5px;top:208.5px" width="4" height="8" viewBox="0 0 4 8"><path d="M0 0 L4 4 L0 8Z" fill="#111"/></svg>
<div class="a" style="left:210px;top:204px;width:494px;height:19px;border:2.2px solid #ee1c24;border-radius:6px"></div>
<div class="a" style="left:201px;top:277px;width:931px;height:36px;background:linear-gradient(#eceef3 0,#e6e9f0 47%,#dee2eb 53%,#e1e4ed 100%);border-top:1px solid #c9cfde"></div>
<div class="wbox" style="left:213px;top:281px;width:42px;height:29px;"></div>
<div class="wbox" style="left:481px;top:281px;width:167px;height:29px;"></div>
<div class="a" style="left:214px;top:282px;width:35px;height:27px;overflow:hidden"><div class="t t13" style="left:9px;top:8px;color:#16162e">31 rekordów</div></div>
<div class="t t13" style="left:491px;top:290px;color:#16162e">31 pozycji</div>
<div class="a" style="left:1132px;top:121px;width:18px;height:192px;background:linear-gradient(90deg,#e1e4ec,#ebedf2 30%,#e9ebf1)"></div>
<svg style="left:1136px;top:127px" width="9" height="5" viewBox="0 0 9 5"><path d="M0.5 4.5 L4.5 0.5 L8.5 4.5Z" fill="#8a93ab"/></svg>
<svg style="left:1136px;top:301px" width="9" height="5" viewBox="0 0 9 5"><path d="M0.5 0.5 L4.5 4.5 L8.5 0.5Z" fill="#8a93ab"/></svg>
<div class="a" style="left:1133px;top:138px;width:15px;height:15px;background:linear-gradient(90deg,#f4f5f9,#dfe3ec);border:1px solid #a9b1c6;border-radius:2px"></div>
<div class="a" style="left:1137px;top:142px;width:7px;height:1.6px;background:#626b87"></div>
<div class="a" style="left:1137px;top:145px;width:7px;height:1.6px;background:#626b87"></div>
<div class="a" style="left:1137px;top:148px;width:7px;height:1.6px;background:#626b87"></div>
<div class="a" style="left:201px;top:313px;width:931px;height:16px;background:linear-gradient(#e1e4ec,#ebedf2 30%,#e9ebf1)"></div>
<svg style="left:207px;top:317.5px" width="5" height="8" viewBox="0 0 5 8"><path d="M4.5 0.5 L0.5 4 L4.5 7.5Z" fill="#8a93ab"/></svg>
<svg style="left:1121px;top:317.5px" width="5" height="8" viewBox="0 0 5 8"><path d="M0.5 0.5 L4.5 4 L0.5 7.5Z" fill="#8a93ab"/></svg>
<div class="a" style="left:220.5px;top:314.5px;width:720.5px;height:14px;background:linear-gradient(#f1f3f7 0,#e6e9f0 48%,#d6dbe6 52%,#dde1ea 100%);border:1px solid #a0a9c0;border-radius:2px"></div>
<div class="a" style="left:577px;top:318px;width:1px;height:7px;background:#59627d"></div>
<div class="a" style="left:580px;top:318px;width:1px;height:7px;background:#59627d"></div>
<div class="a" style="left:583px;top:318px;width:1px;height:7px;background:#59627d"></div>
<div class="a" style="left:668px;top:332px;width:2px;height:2px;background:#7a86a8"></div>
<div class="a" style="left:672px;top:332px;width:2px;height:2px;background:#7a86a8"></div>
<div class="a" style="left:676px;top:332px;width:2px;height:2px;background:#7a86a8"></div>
<div class="a" style="left:680px;top:332px;width:2px;height:2px;background:#7a86a8"></div>
<div class="tab" style="left:206px;top:337px;width:140px;height:26px;"></div>
<div class="t " style="left:235.7px;top:346px;font-size:10.6px;letter-spacing:-0.014px;color:#20203c">Obecności: kalendarz</div>
<div class="tab" style="left:348px;top:337px;width:87px;height:26px;"></div>
<div class="t " style="left:377.3px;top:346px;font-size:10.6px;letter-spacing:-0.169px;color:#20203c">Obecności</div>
<div class="tab" style="left:437px;top:337px;width:66px;height:26px;"></div>
<div class="t " style="left:466.5px;top:346px;font-size:10.6px;letter-spacing:0.018px;color:#20203c">Urlopy</div>
<div class="a" style="left:503.6px;top:335.3px;width:63.2px;height:31px;border:2.4px solid #f01018;border-radius:6px;background:linear-gradient(#f6efdc 0,#faf1d6 55%,#fbe6a8 60%,#f8e1a0 100%);z-index:2"></div>
<div class="t " style="left:537.3px;top:346px;font-size:10.6px;letter-spacing:-0.6px;color:#20203c;z-index:3">RCP</div>
<div class="tab" style="left:568px;top:337px;width:85px;height:26px;"></div>
<div class="t " style="left:598.1px;top:346px;font-size:10.6px;letter-spacing:0.461px;color:#20203c">Wypłaty_</div>
<div class="tab" style="left:655px;top:337px;width:79px;height:26px;"></div>
<div class="t " style="left:684.3px;top:346px;font-size:10.6px;letter-spacing:0.079px;color:#20203c">Umowy_</div>
<div class="tab" style="left:736px;top:337px;width:67px;height:26px;"></div>
<div class="t " style="left:765.4px;top:346px;font-size:10.6px;letter-spacing:-0.6px;color:#20203c">CMMS</div>
<div class="tab" style="left:805px;top:337px;width:79px;height:26px;"></div>
<div class="t " style="left:834.8px;top:346px;font-size:10.6px;letter-spacing:0.503px;color:#20203c">Wypłaty</div>
<div class="tab" style="left:886px;top:337px;width:73px;height:26px;"></div>
<div class="t " style="left:915.3px;top:346px;font-size:10.6px;letter-spacing:-0.079px;color:#20203c">Umowy</div>
<div class="a" style="left:202px;top:362px;width:947px;height:323px;border:1px solid #98a4c0;border-radius:3px;background:#bcc7dc"></div>
<div class="a" style="left:203px;top:363px;width:945px;height:4px;background:linear-gradient(#fbe09a,#fde9ae);border-radius:2px 2px 0 0"></div>
<svg style="left:213.5px;top:341.5px" width="17" height="15.3" viewBox="0 0 20 18">
<circle cx="14.5" cy="3.6" r="2.6" fill="#f0c08a" stroke="#a8763a" stroke-width=".5"/>
<path d="M9.5 11.5 C10 7.8 12 7 14.5 7 C17 7 19 7.8 19.5 11.5Z" fill="#e68a1a" stroke="#a85a0a" stroke-width=".5"/>
<circle cx="6.5" cy="11.5" r="5.6" fill="#6ab82a" stroke="#3f8a14" stroke-width=".8"/>
<path d="M3.4 11.5 A3.1 3.1 0 1 1 6.5 14.6" fill="none" stroke="#fff" stroke-width="1.6"/>
<path d="M6.5 12.6 L6.5 16.8 L4 14.7Z" fill="#fff"/>
</svg>
<svg style="left:357px;top:341px" width="16" height="18" viewBox="0 0 16 18">
<rect x="0.5" y="0.5" width="13" height="14.5" fill="#f4f6fa" stroke="#5a6ec0" stroke-width="1"/>
<rect x="2.6" y="5" width="2.2" height="6" fill="#d8382a"/>
<rect x="5.4" y="2.4" width="2.2" height="8" fill="#4a9a3a"/>
<rect x="8.2" y="4" width="2.2" height="6" fill="#3a7ad8"/>
<circle cx="7.5" cy="9.5" r="3.3" fill="rgba(210,230,250,.85)" stroke="#59627d" stroke-width="1"/>
<path d="M10 12.2 L14.5 16.4" stroke="#e6962a" stroke-width="2" stroke-linecap="round"/>
</svg>
<svg style="left:446px;top:341px" width="15" height="17" viewBox="0 0 15 17">
<circle cx="7.5" cy="10" r="6.5" fill="#5a9ad8" stroke="#3a5a8a" stroke-width=".8"/>
<path d="M3 7 C5 5 8 6 8 8 C8 10 5 11 5 13 C3 12 1.6 10 3 7Z M10 8 C12 7.6 13.4 9 13.2 11 C12 13 10.6 12 10 10.6Z" fill="#5aa83a"/>
<path d="M3 14 C5 16.4 10 16.4 12 14" stroke="#2a3a5a" stroke-width="1.2" fill="none"/>
<path d="M2.5 0.5 L10 2.5 L8.4 6 L1 4Z" fill="#d8382a"/>
</svg>
<svg style="left:514px;top:341px;z-index:3" width="20" height="18" viewBox="0 0 20 18">
<circle cx="10.5" cy="9" r="7.6" fill="#4a8fd8"/>
<path d="M3 7.5 A7.6 7.6 0 0 1 16.5 4" fill="none" stroke="#8cc0f0" stroke-width="1.8"/>
<circle cx="10.5" cy="9" r="5.2" fill="#f4f7fb" stroke="#2f6ab8" stroke-width=".8"/>
<path d="M10.5 9 L15 9" stroke="#d8281c" stroke-width="1.1"/>
<path d="M10.5 9 L8.8 11.6" stroke="#333" stroke-width="1"/>
<path d="M1 5.6 L6.4 6 L3.2 10Z" fill="#4a8fd8"/>
</svg>
<svg style="left:577px;top:342px" width="16" height="17" viewBox="0 0 16 17">
<rect x="0.5" y="7" width="2.2" height="8" fill="#e6a21a"/>
<rect x="3.3" y="3" width="2.2" height="12" fill="#8ab83a"/>
<rect x="6.1" y="0.5" width="1.4" height="14" fill="#4a9ae0"/>
<circle cx="10.5" cy="11" r="4.4" fill="#f6f6f6" stroke="#d8382a" stroke-width="1.8"/>
<circle cx="10.5" cy="11" r="1" fill="#d8382a"/>
</svg>
<svg style="left:663px;top:342px" width="17" height="16" viewBox="0 0 17 16">
<rect x="0.5" y="0.5" width="11" height="8" rx="1.2" fill="#fbe8b8" stroke="#c89a3a" stroke-width=".9"/>
<text x="2" y="7" font-family="Liberation Sans, sans-serif" font-size="6.5" fill="#7a5a1a">ab</text>
<path d="M13.5 2 L16 4.2 L8.5 12.5 L6 10.3Z" fill="#d8382a" stroke="#8a1a14" stroke-width=".6"/>
<path d="M6 10.3 L8.5 12.5 L4.8 13.6Z" fill="#f0d8a8"/>
<rect x="2" y="14.6" width="10" height="1.2" fill="#8a93ab"/>
</svg>
<svg style="left:745px;top:341px" width="18" height="17" viewBox="0 0 18 17">
<circle cx="4.5" cy="4.6" r="2.5" fill="#f0c08a" stroke="#a8763a" stroke-width=".5"/>
<circle cx="9.5" cy="3.6" r="2.7" fill="#f0c08a" stroke="#a8763a" stroke-width=".5"/>
<path d="M0.5 14.5 C1 9.6 3.6 8.6 7 8.6 C10.4 8.6 13 9.6 13.5 14.5Z" fill="#5aa82a" stroke="#3a7a14" stroke-width=".6"/>
<circle cx="13.8" cy="13" r="2.8" fill="#dfe8f6" stroke="#3a5aa8" stroke-width="1.2"/>
<circle cx="13.8" cy="13" r=".9" fill="#3a5aa8"/>
</svg>
<svg style="left:813px;top:340px" width="19" height="19" viewBox="0 0 19 19">
<circle cx="6.5" cy="6" r="5.4" fill="#f6c89a" stroke="#d8782a" stroke-width="1"/>
<text x="6.3" y="9" font-family="Liberation Sans, sans-serif" font-size="8" fill="#c85a1a" text-anchor="middle">€</text>
<circle cx="12" cy="12.5" r="5.8" fill="#6ab82a" stroke="#3f8a14" stroke-width="1"/>
<text x="12" y="16" font-family="Liberation Sans, sans-serif" font-size="9" font-weight="bold" fill="#fff" text-anchor="middle">$</text>
</svg>
<svg style="left:894px;top:342px" width="16" height="17" viewBox="0 0 16 17">
<rect x="4.5" y="0.6" width="9.5" height="12" rx="1" fill="#eef1f8" stroke="#5a6ec0" stroke-width="1"/>
<rect x="0.6" y="3.6" width="9.5" height="12.4" rx="1" fill="#f7f9fc" stroke="#5a6ec0" stroke-width="1"/>
</svg>
<div class="a" style="left:203.5px;top:374.5px;width:21px;height:18px;border:1px solid #a4aec6;border-radius:2px;background:linear-gradient(#f4f5f9,#dfe3ec)"></div>
<svg style="left:209px;top:375px" width="10" height="17" viewBox="0 0 10 17"><path d="M8.8 0.6 L1.2 8.5 L8.8 16.4" fill="none" stroke="#4b536b" stroke-width="1.1"/></svg>
<div class="a" style="left:332.5px;top:374.5px;width:21px;height:18px;border:1px solid #a4aec6;border-radius:2px;background:linear-gradient(#f4f5f9,#dfe3ec)"></div>
<svg style="left:338px;top:375px" width="10" height="17" viewBox="0 0 10 17"><path d="M1.2 0.6 L8.8 8.5 L1.2 16.4" fill="none" stroke="#4b536b" stroke-width="1.1"/></svg>
<div class="inp" style="left:226px;top:375px;width:105px;height:17px;"></div>
<div class="t " style="left:230px;top:379px;font-size:11px;font-weight:bold;letter-spacing:-0.3px;color:#16162e">Pełny zakres</div>
<svg style="left:317px;top:381px" width="9" height="5" viewBox="0 0 9 5"><path d="M0.5 0.5 L8.5 0.5 L4.5 4.5Z" fill="#16162e"/></svg>
<div class="inp" style="left:204px;top:394px;width:83px;height:17px;"></div>
<svg style="left:273px;top:400px" width="9" height="5" viewBox="0 0 9 5"><path d="M0.5 0.5 L8.5 0.5 L4.5 4.5Z" fill="#16162e"/></svg>
<div class="inp" style="left:289px;top:394px;width:83px;height:17px;"></div>
<svg style="left:358px;top:400px" width="9" height="5" viewBox="0 0 9 5"><path d="M0.5 0.5 L8.5 0.5 L4.5 4.5Z" fill="#16162e"/></svg>
<div class="a" style="left:586px;top:375px;width:261px;height:47px;z-index:5;border:4px solid #ee1c24;border-radius:8px;box-shadow:0 0 3px rgba(90,100,130,.6), inset 0 0 3px rgba(90,100,130,.5)"></div>
<div class="cb" style="left:621px;top:393px;width:15px;height:15px;"></div>
<svg style="left:622px;top:394px" width="13" height="13" viewBox="0 0 13 13"><path d="M2 6.5 L5.2 10.5 L11 1.5" fill="none" stroke="#111" stroke-width="2.1"/></svg>
<div class="t " style="left:638.8px;top:396px;font-size:11px;letter-spacing:-0.081px;color:#1c1c3a">Tylko przekroczony czas normatywny</div>
<svg style="left:211px;top:424px" width="16" height="16" viewBox="0 0 16 16">
<path d="M4 0.8 L10.4 0.8 Q12 0.8 12 2.4 L12 13.4 Q12 15 10.4 15 L2 15 Q0.4 15 0.4 13.4 L0.4 4.4Z" fill="#fdfdfe" stroke="#b9bdca" stroke-width=".8"/>
<path d="M0.4 4.4 L4 4.4 L4 0.8Z" fill="#e3e6ed" stroke="#b9bdca" stroke-width=".6"/>
<path d="M12 1.6 L15 4.3 L7.4 12.6 L4.4 9.9Z" fill="#2f7ce4" stroke="#1f56b0" stroke-width=".6"/>
<path d="M6.2 9.6 L12.6 2.6" stroke="#7ab4f6" stroke-width="1"/>
<path d="M12 1.6 L15 4.3 L13.8 5.6 L10.8 2.9Z" fill="#3a3f4c"/>
<path d="M4.4 9.9 L7.4 12.6 L3 13.8Z" fill="#5a5f6c"/>
</svg>
<svg style="left:213px;top:454px" width="13" height="12" viewBox="0 0 13 12"><path d="M2 1.8 L11 10.2 M11 1.8 L2 10.2" stroke="#3f94da" stroke-width="4" stroke-linecap="butt"/><path d="M2.4 2.6 L10.6 10.2 M10.6 2.6 L2.4 10.2" stroke="#62aee8" stroke-width="1.8"/></svg>
<svg style="left:208px;top:484px" width="16" height="16" viewBox="0 0 16 16">
<rect x="4.5" y="0.8" width="10.5" height="10.5" fill="#e9edf6" stroke="#8fa0c8" stroke-width="1"/>
<path d="M1.5 0.5 V11.5 M0 0.5 H3 M0 11.5 H3" stroke="#1c1c3a" stroke-width="1.1"/>
<path d="M4.5 14.5 H15 M4.5 13 V16 M15 13 V16" stroke="#1c1c3a" stroke-width="1.1"/>
</svg>
<div class="a" style="left:235px;top:418px;width:863px;height:38px;background:linear-gradient(#eceef4 0,#e4e7f0 50%,#dde1ec 50%,#d9deea 100%)"></div>
<div class="a" style="left:235px;top:418px;width:12px;height:38px;border-left:1px solid #f3f5f9;border-right:1px solid #d3d8e5"></div>
<div class="a" style="left:247px;top:418px;width:74px;height:38px;border-left:1px solid #f3f5f9;border-right:1px solid #d3d8e5"></div>
<div class="t " style="left:249.3px;top:424px;font-size:12.6px;color:#4d5775">Numer</div>
<div class="t " style="left:249.3px;top:440px;font-size:12.6px;color:#4d5775">seryjny</div>
<div class="a" style="left:321px;top:418px;width:151px;height:38px;border-left:1px solid #f3f5f9;border-right:1px solid #d3d8e5"></div>
<div class="t " style="left:324.3px;top:424px;font-size:12.6px;color:#4d5775">Produkt ( Kod )</div>
<div class="a" style="left:472px;top:418px;width:97px;height:38px;border-left:1px solid #f3f5f9;border-right:1px solid #d3d8e5"></div>
<div class="t " style="left:475.4px;top:424px;font-size:12.6px;color:#4d5775">Etap</div>
<div class="a" style="left:569px;top:418px;width:82px;height:38px;border-left:1px solid #f3f5f9;border-right:1px solid #d3d8e5"></div>
<div class="t " style="left:571.4px;top:424px;font-size:12.6px;color:#4d5775">Czynność (</div>
<div class="t " style="left:571.4px;top:440px;font-size:12.6px;color:#4d5775">Kod )</div>
<div class="a" style="left:651px;top:418px;width:73px;height:38px;border-left:1px solid #f3f5f9;border-right:1px solid #d3d8e5"></div>
<div class="t " style="left:654px;top:424px;font-size:12.6px;color:#4d5775">Ilość</div>
<div class="t " style="left:654px;top:440px;font-size:12.6px;color:#4d5775">wykonana</div>
<div class="a" style="left:724px;top:418px;width:108px;height:38px;border-left:1px solid #f3f5f9;border-right:1px solid #d3d8e5"></div>
<div class="t " style="left:727px;top:424px;font-size:12.6px;color:#4d5775">Czas wykonania</div>
<div class="a" style="left:832px;top:418px;width:107px;height:38px;border-left:1px solid #f3f5f9;border-right:1px solid #d3d8e5"></div>
<div class="t " style="left:834.8px;top:424px;font-size:12.6px;color:#4d5775">Czas normatywny</div>
<div class="a" style="left:939px;top:418px;width:79px;height:38px;border-left:1px solid #f3f5f9;border-right:1px solid #d3d8e5"></div>
<div class="t " style="left:941.6px;top:424px;font-size:12.6px;color:#4d5775">Stawka za</div>
<div class="t " style="left:941.6px;top:440px;font-size:12.6px;color:#4d5775">akord</div>
<div class="a" style="left:1018px;top:418px;width:80px;height:38px;border-left:1px solid #f3f5f9;border-right:1px solid #d3d8e5"></div>
<div class="t " style="left:1020.4px;top:424px;font-size:12.6px;color:#4d5775">Koszt wg</div>
<div class="t " style="left:1020.4px;top:440px;font-size:12.6px;color:#4d5775">akordu</div>
<svg style="left:236.6px;top:432.7px" width="8" height="8" viewBox="0 0 8 8"><path d="M4 0.3 V7.7 M0.3 4 H7.7 M1.4 1.4 L6.6 6.6 M6.6 1.4 L1.4 6.6" stroke="#1c1c2c" stroke-width="1"/><circle cx="4" cy="4" r="1.1" fill="#e4e7ef"/></svg>
<div class="a" style="left:235px;top:456px;width:12px;height:21px;background:#d9deea"></div>
<div class="a" style="left:247px;top:456px;width:851px;height:21px;background:#edf5ed"></div>
<div class="t " style="left:614px;top:461px;font-size:12.6px;letter-spacing:0.196px;color:#59627d">kliknij aby dodać filtr</div>
<svg style="left:238px;top:462px" width="6" height="10" viewBox="0 0 6 10"><circle cx="3" cy="2.6" r="2.2" fill="#222"/><rect x="2.4" y="4" width="1.2" height="5" fill="#222"/><circle cx="2.4" cy="2" r=".8" fill="#fff"/></svg>
<div class="a" style="left:235px;top:476px;width:863px;height:2px;background:#a9b4cc"></div>
<div class="a" style="left:235px;top:478px;width:863px;height:165px;overflow:hidden">
<div class="a" style="left:0;top:0px;width:12px;height:17px;background:#d9deea;border-bottom:1px solid #e9ecf3"></div>
<div class="a" style="left:12px;top:0px;width:851px;height:17px;background:#ff8000"></div>
<div class="a" style="left:87px;top:0px;width:150.5px;height:17px;background:#d5d5d5"></div>
<div class="a" style="left:416px;top:0px;width:73px;height:17px;background:#d5d5d5"></div>
<div class="t t11" style="left:14px;top:4px;color:#241c2c">322</div>
<div class="t t11" style="left:88px;top:4px;color:#111">Stelaż drewniany</div>
<div class="t t11" style="left:239px;top:4px;color:#241c2c">Cięcie</div>
<div class="t t11" style="left:336px;top:4px;color:#241c2c">Cięcie</div>
<div class="t t11" style="right:376px;top:4px;color:#111">1</div>
<div class="t t11" style="right:268px;top:4px;color:#241c2c">2929h 20m 8s</div>
<div class="t t11" style="right:161px;top:4px;color:#241c2c">0s</div>
<div class="t t11" style="right:82px;top:4px;color:#241c2c">0,00</div>
<div class="t t11" style="right:2px;top:4px;color:#241c2c">0,00</div>
<div class="a" style="left:0;top:17px;width:12px;height:17px;background:#d9deea;border-bottom:1px solid #e9ecf3"></div>
<div class="a" style="left:12px;top:17px;width:851px;height:17px;background:#ff2626"></div>
<div class="a" style="left:87px;top:17px;width:150.5px;height:17px;background:#d5d5d5"></div>
<div class="a" style="left:416px;top:17px;width:73px;height:17px;background:#d5d5d5"></div>
<div class="t t11" style="left:14px;top:21px;color:#2a1230">120</div>
<div class="t t11" style="left:88px;top:21px;color:#111">Sofa Mars</div>
<div class="t t11" style="left:239px;top:21px;color:#2a1230">Cięcie</div>
<div class="t t11" style="left:336px;top:21px;color:#2a1230">Cięcie</div>
<div class="t t11" style="right:376px;top:21px;color:#111">1</div>
<div class="t t11" style="right:268px;top:21px;color:#2a1230">2929h 20m 24s</div>
<div class="t t11" style="right:164px;top:21px;color:#2a1230">12m</div>
<div class="t t11" style="right:82px;top:21px;color:#2a1230">4,00</div>
<div class="t t11" style="right:2px;top:21px;color:#2a1230">4,00</div>
<div class="a" style="left:0;top:34px;width:12px;height:17px;background:#d9deea;border-bottom:1px solid #e9ecf3"></div>
<div class="a" style="left:12px;top:34px;width:851px;height:17px;background:#ff8000"></div>
<div class="a" style="left:87px;top:34px;width:150.5px;height:17px;background:#d5d5d5"></div>
<div class="a" style="left:416px;top:34px;width:73px;height:17px;background:#d5d5d5"></div>
<div class="t t11" style="left:14px;top:38px;color:#241c2c">178</div>
<div class="t t11" style="left:88px;top:38px;color:#111">Fotel Neapol</div>
<div class="t t11" style="left:239px;top:38px;color:#241c2c">Cięcie</div>
<div class="t t11" style="left:336px;top:38px;color:#241c2c">Cięcie</div>
<div class="t t11" style="right:376px;top:38px;color:#111">0</div>
<div class="t t11" style="right:268px;top:38px;color:#241c2c">1s</div>
<div class="t t11" style="right:161px;top:38px;color:#241c2c">0s</div>
<div class="t t11" style="right:82px;top:38px;color:#241c2c">10,00</div>
<div class="t t11" style="right:2px;top:38px;color:#241c2c">0,00</div>
<div class="a" style="left:0;top:51px;width:12px;height:17px;background:#d9deea;border-bottom:1px solid #e9ecf3"></div>
<div class="a" style="left:12px;top:51px;width:851px;height:17px;background:#ff2626"></div>
<div class="a" style="left:87px;top:51px;width:150.5px;height:17px;background:#d5d5d5"></div>
<div class="a" style="left:416px;top:51px;width:73px;height:17px;background:#d5d5d5"></div>
<div class="t t11" style="left:14px;top:55px;color:#2a1230">5385</div>
<div class="t t11" style="left:88px;top:55px;color:#111">113</div>
<div class="t t11" style="left:239px;top:55px;color:#2a1230">Cięcie</div>
<div class="t t11" style="left:336px;top:55px;color:#2a1230">Cięcie</div>
<div class="t t11" style="right:376px;top:55px;color:#111">1</div>
<div class="t t11" style="right:268px;top:55px;color:#2a1230">2929h 19m 5s</div>
<div class="t t11" style="right:164px;top:55px;color:#2a1230">15m</div>
<div class="t t11" style="right:82px;top:55px;color:#2a1230">4,00</div>
<div class="t t11" style="right:2px;top:55px;color:#2a1230">4,00</div>
<div class="a" style="left:0;top:68px;width:12px;height:17px;background:#d9deea;border-bottom:1px solid #e9ecf3"></div>
<div class="a" style="left:12px;top:68px;width:851px;height:17px;background:#ff8000"></div>
<div class="a" style="left:87px;top:68px;width:150.5px;height:17px;background:#d5d5d5"></div>
<div class="a" style="left:416px;top:68px;width:73px;height:17px;background:#d5d5d5"></div>
<div class="t t11" style="left:14px;top:72px;color:#241c2c">5386</div>
<div class="t t11" style="left:88px;top:72px;color:#111">Fotel Inka</div>
<div class="t t11" style="left:239px;top:72px;color:#241c2c">Cięcie</div>
<div class="t t11" style="left:336px;top:72px;color:#241c2c">Cięcie</div>
<div class="t t11" style="right:376px;top:72px;color:#111">0</div>
<div class="t t11" style="right:268px;top:72px;color:#241c2c">34s</div>
<div class="t t11" style="right:161px;top:72px;color:#241c2c">0s</div>
<div class="t t11" style="right:82px;top:72px;color:#241c2c">4,00</div>
<div class="a" style="left:0;top:85px;width:12px;height:17px;background:#d9deea;border-bottom:1px solid #e9ecf3"></div>
<div class="a" style="left:12px;top:85px;width:851px;height:17px;background:#ff2626"></div>
<div class="a" style="left:87px;top:85px;width:150.5px;height:17px;background:#d5d5d5"></div>
<div class="a" style="left:416px;top:85px;width:73px;height:17px;background:#d5d5d5"></div>
<div class="t t11" style="left:14px;top:89px;color:#2a1230">5387</div>
<div class="t t11" style="left:88px;top:89px;color:#111">Fotel Inka</div>
<div class="t t11" style="left:239px;top:89px;color:#2a1230">Cięcie</div>
<div class="t t11" style="left:336px;top:89px;color:#2a1230">Cięcie</div>
<div class="t t11" style="right:376px;top:89px;color:#111">1</div>
<div class="t t11" style="right:268px;top:89px;color:#2a1230">2929h 15m 24s</div>
<div class="t t11" style="right:164px;top:89px;color:#2a1230">15m</div>
<div class="t t11" style="right:82px;top:89px;color:#2a1230">4,00</div>
<div class="t t11" style="right:2px;top:89px;color:#2a1230">4,00</div>
<div class="a" style="left:0;top:102px;width:12px;height:17px;background:#d9deea;border-bottom:1px solid #e9ecf3"></div>
<div class="a" style="left:12px;top:102px;width:851px;height:17px;background:#ff2626"></div>
<div class="a" style="left:87px;top:102px;width:150.5px;height:17px;background:#d5d5d5"></div>
<div class="a" style="left:416px;top:102px;width:73px;height:17px;background:#d5d5d5"></div>
<div class="t t11" style="left:14px;top:106px;color:#2a1230">147</div>
<div class="t t11" style="left:88px;top:106px;color:#111">Kanapa Venus</div>
<div class="t t11" style="left:239px;top:106px;color:#2a1230">Cięcie</div>
<div class="t t11" style="left:336px;top:106px;color:#2a1230">Cięcie</div>
<div class="t t11" style="right:376px;top:106px;color:#111">1</div>
<div class="t t11" style="right:268px;top:106px;color:#2a1230">2905h 10m 17s</div>
<div class="t t11" style="right:164px;top:106px;color:#2a1230">12m</div>
<div class="t t11" style="right:82px;top:106px;color:#2a1230">4,00</div>
<div class="t t11" style="right:2px;top:106px;color:#2a1230">4,00</div>
<div class="a" style="left:0;top:119px;width:12px;height:17px;background:#d9deea;border-bottom:1px solid #e9ecf3"></div>
<div class="a" style="left:12px;top:119px;width:851px;height:17px;background:#ff2626"></div>
<div class="a" style="left:87px;top:119px;width:150.5px;height:17px;background:#d5d5d5"></div>
<div class="a" style="left:416px;top:119px;width:73px;height:17px;background:#d5d5d5"></div>
<div class="t t11" style="left:14px;top:123px;color:#2a1230">148</div>
<div class="t t11" style="left:88px;top:123px;color:#111">Kanapa Venus</div>
<div class="t t11" style="left:239px;top:123px;color:#2a1230">Krojenie mat.</div>
<div class="t t11" style="left:336px;top:123px;color:#2a1230">Krojenie mat.</div>
<div class="t t11" style="right:376px;top:123px;color:#111">1</div>
<div class="t t11" style="right:268px;top:123px;color:#2a1230">2928h 45m 32s</div>
<div class="t t11" style="right:161px;top:123px;color:#2a1230">9m 15s</div>
<div class="t t11" style="right:82px;top:123px;color:#2a1230">3,08</div>
<div class="t t11" style="right:2px;top:123px;color:#2a1230">3,08</div>
<div class="a" style="left:0;top:136px;width:12px;height:17px;background:#d9deea;border-bottom:1px solid #e9ecf3"></div>
<div class="a" style="left:12px;top:136px;width:851px;height:17px;background:#ff2626"></div>
<div class="a" style="left:87px;top:136px;width:150.5px;height:17px;background:#d5d5d5"></div>
<div class="a" style="left:416px;top:136px;width:73px;height:17px;background:#d5d5d5"></div>
<div class="t t11" style="left:14px;top:140px;color:#2a1230">102</div>
<div class="t t11" style="left:88px;top:140px;color:#111">Fotel Inka</div>
<div class="t t11" style="left:239px;top:140px;color:#2a1230">Szycie</div>
<div class="t t11" style="left:336px;top:140px;color:#2a1230">Szycie</div>
<div class="t t11" style="right:376px;top:140px;color:#111">1</div>
<div class="t t11" style="right:268px;top:140px;color:#2a1230">2902h 54m 16s</div>
<div class="t t11" style="right:161px;top:140px;color:#2a1230">2h 12m 30s</div>
<div class="t t11" style="right:82px;top:140px;color:#2a1230">44,00</div>
<div class="t t11" style="right:2px;top:140px;color:#2a1230">44,00</div>
<div class="a" style="left:0;top:153px;width:12px;height:17px;background:#d9deea;border-bottom:1px solid #e9ecf3"></div>
<div class="a" style="left:12px;top:153px;width:851px;height:17px;background:#ff8000"></div>
<div class="a" style="left:87px;top:153px;width:150.5px;height:17px;background:#d5d5d5"></div>
<div class="a" style="left:416px;top:153px;width:73px;height:17px;background:#d5d5d5"></div>
<div class="t t11" style="left:14px;top:157px;color:#241c2c">179</div>
<div class="t t11" style="left:88px;top:157px;color:#111">Fotel Neapol</div>
<div class="t t11" style="left:239px;top:157px;color:#241c2c">Cięcie</div>
<div class="t t11" style="left:336px;top:157px;color:#241c2c">Cięcie</div>
<div class="t t11" style="right:376px;top:157px;color:#111">0</div>
<div class="t t11" style="right:268px;top:157px;color:#241c2c">2s</div>
<div class="t t11" style="right:161px;top:157px;color:#241c2c">0s</div>
<div class="t t11" style="right:82px;top:157px;color:#241c2c">10,00</div>
<div class="t t11" style="right:2px;top:157px;color:#241c2c">0,00</div>
</div>
<div class="a" style="left:235px;top:643px;width:863px;height:37px;background:linear-gradient(#eceef3 0,#e6e9f0 47%,#dee2eb 53%,#e1e4ed 100%);border-top:1px solid #c9cfde"></div>
<div class="wbox" style="left:249px;top:647px;width:71px;height:29px;"></div>
<div class="wbox" style="left:475px;top:647px;width:92px;height:29px;"></div>
<div class="a" style="left:250px;top:648px;width:63px;height:27px;overflow:hidden"><div class="t t13" style="left:10px;top:8px;color:#16162e">137 rekordów</div></div>
<div class="t t13" style="left:486px;top:656px;color:#16162e">137 pozycji</div>
<div class="a" style="left:1098px;top:418px;width:17px;height:262px;background:linear-gradient(90deg,#dfe2ea,#e8eaf1 30%,#e6e9f0)"></div>
<svg style="left:1102px;top:424px" width="9" height="5" viewBox="0 0 9 5"><path d="M0.5 4.5 L4.5 0.5 L8.5 4.5Z" fill="#8a93ab"/></svg>
<svg style="left:1102px;top:668px" width="9" height="5" viewBox="0 0 9 5"><path d="M0.5 0.5 L4.5 4.5 L8.5 0.5Z" fill="#8a93ab"/></svg>
<div class="a" style="left:1099.5px;top:495px;width:14.5px;height:14.5px;background:linear-gradient(90deg,#f6f7fa,#e3e6ee);border:1px solid #a9b1c6;border-radius:2px"></div>
<div class="a" style="left:1103px;top:498.5px;width:7px;height:1.6px;background:#626b87"></div>
<div class="a" style="left:1103px;top:501.5px;width:7px;height:1.6px;background:#626b87"></div>
<div class="a" style="left:1103px;top:504.5px;width:7px;height:1.6px;background:#626b87"></div>
<div class="a" style="left:1116px;top:418.5px;width:30.5px;height:27px;border:1px solid #b5ad98;border-radius:3px;background:linear-gradient(#faf7ec,#f1ead4)"></div>
<div class="a" style="left:1118.3px;top:420.7px;width:25.7px;height:22.4px;border:1px dotted #222"></div>
<svg style="left:1123.5px;top:425px" width="16" height="14" viewBox="0 0 16 14">
<circle cx="2.2" cy="2" r="1.7" fill="#9cc0f4" stroke="#2f5fc8" stroke-width=".9"/>
<circle cx="2.2" cy="7" r="1.7" fill="#9cc0f4" stroke="#2f5fc8" stroke-width=".9"/>
<circle cx="2.2" cy="12" r="1.7" fill="#9cc0f4" stroke="#2f5fc8" stroke-width=".9"/>
<circle cx="1.9" cy="1.6" r=".6" fill="#fff"/><circle cx="1.9" cy="6.6" r=".6" fill="#fff"/><circle cx="1.9" cy="11.6" r=".6" fill="#fff"/>
<path d="M6.6 1.5 H14.4 M6.6 6.5 H14.4 M6.6 11.5 H14.4" stroke="#f4f6fa" stroke-width="3" stroke-linecap="round"/>
<path d="M6.2 1.5 H14.8 M6.2 6.5 H14.8 M6.2 11.5 H14.8" stroke="#23233f" stroke-width="1"/>
</svg>
<div class="a" style="left:203px;top:680px;width:945px;height:4px;background:linear-gradient(#fde9ae,#fbe09a);border-radius:0 0 2px 2px"></div>
<div class="a" style="left:668px;top:687px;width:2px;height:2px;background:#7a86a8"></div>
<div class="a" style="left:672px;top:687px;width:2px;height:2px;background:#7a86a8"></div>
<div class="a" style="left:676px;top:687px;width:2px;height:2px;background:#7a86a8"></div>
<div class="a" style="left:680px;top:687px;width:2px;height:2px;background:#7a86a8"></div>
<div class="t " style="left:588.7px;top:694px;font-size:10.8px;letter-spacing:2.286px;color:#1c1c3a">UKRYJ SZCZEGÓŁY</div>
<div class="t " style="left:733px;top:694px;font-size:11.5px;letter-spacing:2.03px;color:#1c1c3a">[F8]</div>
<div class="a" style="left:201px;top:709px;width:949px;height:4px;background:linear-gradient(#fde9ae,#fbe09a);border-radius:0 0 3px 3px"></div>
<div class="a" style="left:8px;top:714px;width:1143px;height:17px;background:linear-gradient(#eef0f4 0,#e7eaf0 45%,#dcdfe9 52%,#e0e3ec 100%);border-radius:0 0 2px 2px"></div>
<div class="a" style="left:8px;top:731px;width:1143px;height:1px;background:#c9cfde"></div>
<div class="t " style="left:12.8px;top:718px;font-size:10.8px;letter-spacing:0.049px;color:#3f4868">Copyright © 2005-2024 RHO Software</div>
<div class="t " style="left:346.4px;top:718px;font-size:10.8px;letter-spacing:0.16px;color:#3f4868">Modus demo v.5.0.0.531</div>
<div class="t " style="left:680.5px;top:718px;font-size:10.8px;letter-spacing:0.354px;color:#3f4868">Nr licencji: 2223/111111111111111</div>
<div class="t " style="left:1036px;top:718px;font-size:10.8px;letter-spacing:0.162px;color:#3f4868;white-space:pre">2024-12-12,  09:12:58</div>
<div class="a" style="left:340px;top:715px;width:1px;height:16px;background:rgba(255,255,255,.5)"></div>
<div class="a" style="left:674px;top:715px;width:1px;height:16px;background:rgba(255,255,255,.5)"></div>
<div class="a" style="left:1010px;top:715px;width:1px;height:16px;background:rgba(255,255,255,.5)"></div>
</body></html>
